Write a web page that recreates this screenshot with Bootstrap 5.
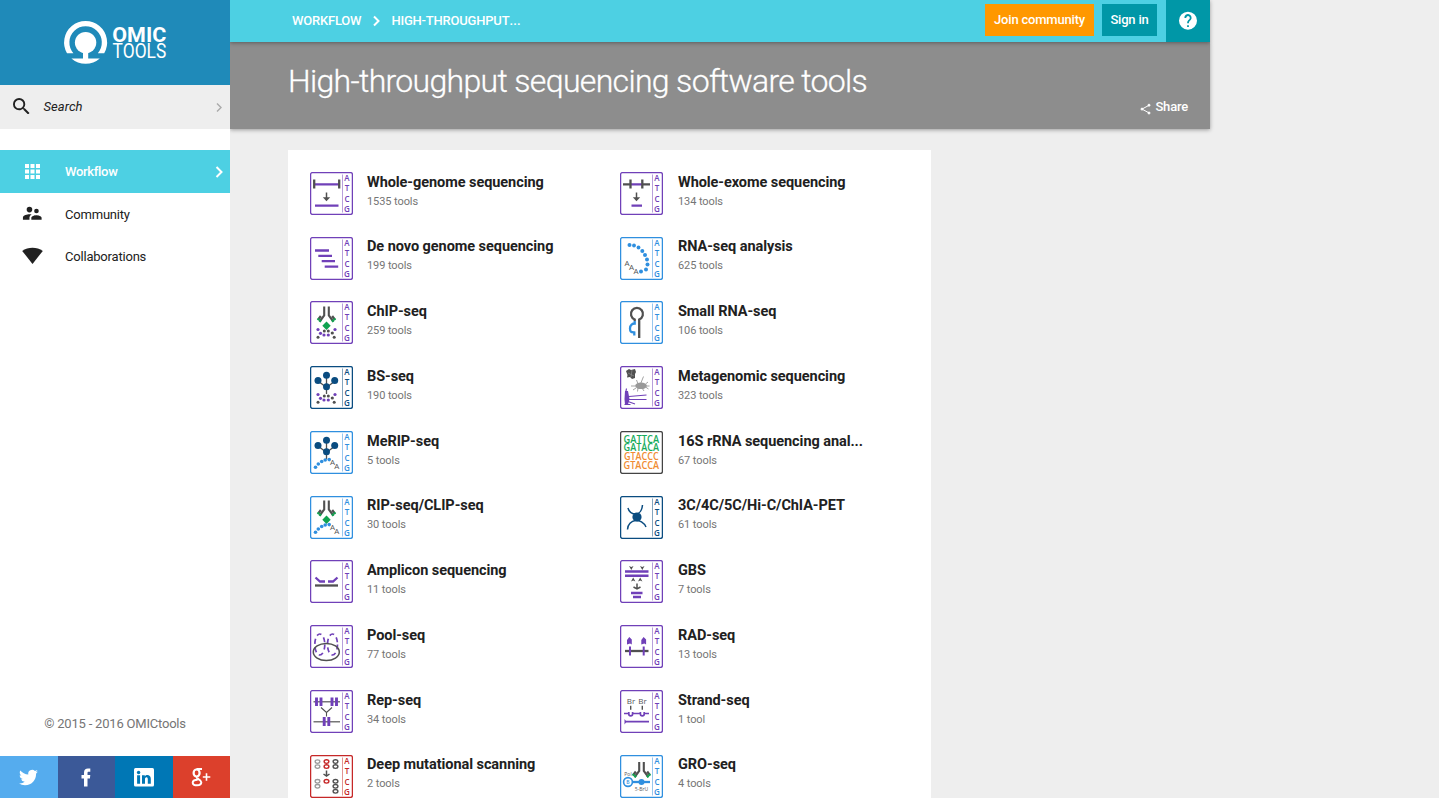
<!DOCTYPE html>
<html lang="en">
<head>
<meta charset="utf-8">
<meta name="viewport" content="width=device-width, initial-scale=1">
<title>High-throughput sequencing software tools</title>
<link href="https://cdn.jsdelivr.net/npm/bootstrap@5.3.0/dist/css/bootstrap.min.css" rel="stylesheet">
<style>
  body { background: #eee; font-family: Roboto, sans-serif; color: #212121; font-size: 13px; line-height: 20px; letter-spacing: -.2px; }
  a { color: inherit; text-decoration: none; }
  svg { display: block; flex: none; }
  .side { width: 230px; background: #fff; z-index: 3; }
  .brand { height: 85px; background: #1f8ab9; padding-left: 64px; padding-top: 1px; letter-spacing: 0; }
  .brand svg { overflow: visible; }
  .searchbar { height: 44px; background: #eee; padding: 0 7px 2px 13px; }
  .searchbar .lbl-search { margin-left: 14px; padding-top: 2px; letter-spacing: .05px; }
  .side-nav { padding-top: 21px; }
  .side-nav .nav-link { height: 42px; padding: 1px 7px 0 22px; color: #212121; }
  .side-nav .nav-link.active { height: 43px; padding-top: 0; background: #4dd0e3; color: #fff; font-weight: 500; letter-spacing: -.3px; }
  .side-nav .lbl { margin-left: 22px; }
  .copy { color: #757575; height: 42px; }
  .social { height: 42px; }
  .social a { flex: 1; display: flex; align-items: center; justify-content: center; }
  .tw { background: #55acee; } .fb-bg { background: #3b5998; } .li-bg { background: #0077b5; } .gp-bg { background: #dc402c; }
  .page-col { width: 980px; }
  .topbar { height: 42px; background: #4dd0e3; box-shadow: 0 1px 4px rgba(0,0,0,.35); padding-left: 62px; z-index: 2; color: #fff; font-weight: 500; }
  .topbar .act { height: 32px; padding: 0; display: flex; align-items: center; justify-content: center; color: #fff; font-size: 13px; font-weight: 500; border: 0; border-radius: 0; }
  .topbar .dots { letter-spacing: .2px; }
  .join { width: 109px; background: #ff9800; margin-right: 8px; }
  .sign { width: 55px; background: #0097a7; margin-right: 9px; }
  .help { width: 44px; height: 42px; background: #0097a7; }
  .hero { height: 87px; background: #8d8d8d; color: #fff; box-shadow: 0 1px 4px rgba(0,0,0,.35); padding: 0 22px 0 58px; }
  .hero h1 { font-size: 32px; font-weight: 300; line-height: 40px; letter-spacing: -.67px; padding-top: 19px; margin: 0 0 -4px; -webkit-text-stroke: .3px #fff; }
  .share { font-weight: 500; }
  .tools { width: 643px; background: #fff; margin: 21px 0 0 58px; padding: 21.9px 0 0 22px; display: grid; grid-template-columns: 310px 311px; grid-auto-rows: 64.75px; letter-spacing: 0; }
  .tool { display: flex; align-items: flex-start; }
  .tool h2 { font-size: 14.5px; font-weight: 700; line-height: 20px; letter-spacing: -.06px; margin: 0; }
  .tool p { font-size: 11px; line-height: 18px; color: #757575; margin: 0; letter-spacing: -.08px; }
  .tool-text { margin-left: 14px; padding-top: .7px; }
  .tool:nth-child(even) .tool-text { margin-left: 15px; }
  .ic { width: 43px; height: 43px; color: #7040b8; fill: none; stroke-width: 2.3; }
  .ic text { fill: currentColor; font-family: "Open Sans", sans-serif; font-weight: 600; font-size: 8px; text-anchor: middle; stroke: none; }
  .ic .gl { fill: #555; font-weight: 400; }
  .ic .tiny { font-size: 5px; }
  .ic .seq { font-size: 9.8px; }
  .ic .sg { fill: #17ab5c; } .ic .so { fill: #f08c32; }
  .c-blue { color: #2f8fdf; } .c-navy { color: #0a4c80; } .c-red { color: #c62828; } .c-gray { color: #444; }
  .p { stroke: #7040b8; } .k { stroke: #505050; } .b { stroke: #2f8fdf; } .g { stroke: #0fa34f; }
  .fp { fill: #7040b8; } .fk { fill: #505050; } .fb { fill: #2f8fdf; } .fg { fill: #0fa34f; } .fn { fill: #0a4c80; }
</style>
</head>
<body class="vh-100 overflow-hidden">
<svg width="0" height="0" class="position-absolute">
  <defs>
    <symbol id="box" viewBox="0 0 43 43"><rect x=".6" y=".6" width="41.8" height="41.8" rx="1.8" fill="#fff" stroke="currentColor" stroke-width="1.3"/></symbol>
    <symbol id="frame" viewBox="0 0 43 43"><use href="#box"/><path d="M32.5 2.500v38" stroke="currentColor" stroke-width="1" opacity=".5"/></symbol>
    <symbol id="arms" viewBox="0 0 43 43" fill="none"><path class="k" stroke-width="2.100" d="M14.200 5.500V14.500l-4.500 6M18.800 5.500V14.500l4.500 6M10.800 15l-2.600 3.500M22.200 15l2.600 3.500"/><path class="g" stroke-width="2.100" d="M11 18.800l-1.500 2M22 18.800l1.500 2M9 17.300l-1.300 1.800M24 17.300l1.300 1.800"/></symbol>
    <symbol id="antibody" viewBox="0 0 43 43"><use href="#arms"/><path class="fg" d="M16.500 20.500l4.200 4.200-4.200 4.200-4.200-4.200z"/></symbol>
    <symbol id="histone" viewBox="0 0 43 43"><g class="fp"><circle cx="8" cy="28.500" r="1.600"/><circle cx="25" cy="28.500" r="1.600"/><circle cx="10.500" cy="32.300" r="1.600"/><circle cx="14" cy="34" r="1.600"/><circle cx="18.300" cy="34" r="1.600"/></g><g class="fk"><circle cx="14.300" cy="30" r="1.500"/><circle cx="18.300" cy="30" r="1.500"/><circle cx="22.300" cy="32" r="1.600"/><circle cx="8" cy="36.300" r="1.500"/><circle cx="24.200" cy="36.300" r="1.500"/></g></symbol>
    <symbol id="methyl" viewBox="0 0 43 43"><path class="k" stroke-width="1.300" fill="none" d="M8 15l8.500 6.500L25 15M16.500 9v19"/><g class="fn"><circle cx="16.500" cy="9.300" r="3.500"/><circle cx="8" cy="14.500" r="3.500"/><circle cx="24.700" cy="14.500" r="3.500"/><circle cx="16.500" cy="20.800" r="3.500"/></g></symbol>
    <symbol id="strand" viewBox="0 0 43 43"><g class="fb"><circle cx="5.500" cy="36.300" r="1.800"/><circle cx="8.300" cy="33" r="1.800"/><circle cx="11.700" cy="30.500" r="1.800"/><circle cx="15.200" cy="29" r="1.800"/><circle cx="19.200" cy="28.600" r="1.800"/></g></symbol>
  </defs>
</svg>
<div class="d-flex h-100">
  <aside class="side d-flex flex-column h-100 position-relative">
    <a href="#" class="brand d-flex align-items-center" aria-label="OMICtools">
      <svg width="104" height="44" viewBox="0 0 104 44" fill="#fff">
        <path d="M9.400 32.200H3A21.500 21.500 0 1 1 40.200 32.200H33.800A16.200 16.200 0 1 0 9.400 32.200Z"/>
        <circle cx="21.600" cy="21.600" r="10.700"/><path d="M19 30h5.200v7.400h11.600a21.500 21.500 0 0 1-28.400 0H19z"/>
        <text x="48.300" y="20.700" font-size="21" font-weight="700" textLength="54" lengthAdjust="spacingAndGlyphs">OMIC</text>
        <text x="48.600" y="37.300" font-size="20" font-weight="400" textLength="53.600" lengthAdjust="spacingAndGlyphs">TOOLS</text>
      </svg>
    </a>
    <div class="searchbar d-flex align-items-center">
      <svg width="16.500" height="16.500" viewBox="3 3 17.500 17.500" fill="#212121"><path d="M15.500 14h-.79l-.28-.27A6.470 6.470 0 0 0 16 9.500 6.500 6.500 0 1 0 9.500 16c1.610 0 3.090-.59 4.230-1.570l.27.28v.79l5 4.990L20.490 19l-4.990-5zm-6 0a4.500 4.500 0 1 1 0-9 4.500 4.500 0 0 1 0 9z"/></svg>
      <span class="fst-italic lbl-search">Search</span>
      <svg class="ms-auto mt-1" width="8" height="10" viewBox="0 0 8 10" fill="none" stroke="#aaa" stroke-width="1.400"><path d="M2 .5l4 4-4 4"/></svg>
    </div>
    <nav class="side-nav nav flex-column">
      <a href="#" class="nav-link active d-flex align-items-center">
        <svg width="21" height="21" viewBox="0 0 21 21" fill="#fff"><path d="M3 3h4v4H3zM8.500 3h4v4h-4zM14 3h4v4h-4zM3 8.500h4v4H3zM8.500 8.500h4v4h-4zM14 8.500h4v4h-4zM3 14h4v4H3zM8.500 14h4v4h-4zM14 14h4v4h-4z"/></svg>
        <span class="lbl">Workflow</span>
        <svg class="ms-auto" width="8" height="12" viewBox="0 0 8 12" fill="none" stroke="#fff" stroke-width="2"><path d="M1.500 1l5 5-5 5"/></svg>
      </a>
      <a href="#" class="nav-link d-flex align-items-center">
        <svg width="21" height="21" viewBox="1 2 22.500 22.500" fill="#212121"><path d="M16.500 12a2.500 2.500 0 1 0 0-5 2.500 2.500 0 0 0 0 5zM9 11a3 3 0 1 0 0-6 3 3 0 0 0 0 6zm7.500 3c-1.830 0-5.500.920-5.500 2.750V19h11v-2.250c0-1.830-3.670-2.750-5.500-2.750zM9 13c-2.330 0-7 1.170-7 3.500V19h7v-2.250c0-.850.330-2.340 2.370-3.470C10.500 13.100 9.660 13 9 13z"/></svg>
        <span class="lbl">Community</span>
      </a>
      <a href="#" class="nav-link d-flex align-items-center">
        <svg width="21" height="21" viewBox="0 0 21 21" fill="#212121"><path d="M.2 4.900C6 .6 15 .6 20.800 4.900L10.500 17.900z"/></svg>
        <span class="lbl">Collaborations</span>
      </a>
    </nav>
    <div class="mt-auto copy text-center">© 2015 - 2016 OMICtools</div>
    <div class="social d-flex">
      <a href="#" aria-label="Twitter" class="tw"><svg width="19" height="19" viewBox="0 0 24 24" fill="#fff"><path d="M23.950 4.570a10 10 0 0 1-2.820.77 4.960 4.960 0 0 0 2.160-2.720c-.95.550-2 .950-3.130 1.180a4.920 4.920 0 0 0-8.380 4.480C7.690 8.090 4.070 6.130 1.640 3.160a4.820 4.820 0 0 0-.67 2.480c0 1.710.870 3.210 2.190 4.100a4.900 4.900 0 0 1-2.230-.62v.060a4.920 4.920 0 0 0 3.950 4.830 5 5 0 0 1-2.210.080 4.940 4.940 0 0 0 4.600 3.420A9.870 9.870 0 0 1 0 19.540a13.990 13.990 0 0 0 7.550 2.210c9.050 0 14-7.500 14-13.980 0-.21 0-.42-.020-.63a9.940 9.940 0 0 0 2.420-2.570z"/></svg></a>
      <a href="#" aria-label="Facebook" class="fb-bg"><svg width="10" height="19" viewBox="0 0 10 19" fill="#fff"><path d="M3 18.500V10.500H.5V7H3V4.800C3 2 4.500.6 7 .6h2.300v3.200H7.700C6.800 3.800 6.500 4.200 6.500 5v2h2.800l-.4 3.500H6.500v8z"/></svg></a>
      <a href="#" aria-label="LinkedIn" class="li-bg"><svg width="20" height="19" viewBox="0 0 20 19"><rect width="20" height="18.500" rx="1.500" fill="#fff"/><g fill="#0077b5"><circle cx="4.600" cy="4.500" r="1.700"/><path d="M3.100 7.300h3v8.500h-3zM8 7.300h2.800v1.200c1.300-2.200 6-2.100 6 2.300v5h-3v-4.500c0-2.700-2.800-2.500-2.800 0v4.500H8z"/></g></svg></a>
      <a href="#" aria-label="Google Plus" class="gp-bg"><svg width="20" height="19" viewBox="0 0 20 19" fill="none" stroke="#fff"><ellipse cx="5.600" cy="5" rx="3" ry="3.500" stroke-width="2.200"/><path d="M5.500 1h5.500M6 9c-1.500 1.500 4.300 2.500 4.300 5.300 0 4-8.600 4-8.600.5 0-2.200 2.500-3 5-3" stroke-width="2"/><path d="M15.500 5.300v7.500M11.800 9h7.500" stroke-width="1.600"/></svg></a>
    </div>
  </aside>
  <main class="page-col">
    <header class="topbar d-flex position-relative">
      <div class="d-flex align-items-center">
        <a href="#">WORKFLOW</a>
        <svg class="mx-2" width="14" height="12" viewBox="0 0 14 12" fill="none" stroke="#fff" stroke-width="2"><path d="M5 1.500L9.500 6 5 10.500"/></svg>
        <a href="#">HIGH-THROUGHPUT<span class="dots">...</span></a>
      </div>
      <div class="ms-auto d-flex pt-1">
        <a href="#" class="act btn join">Join community</a>
        <a href="#" class="act btn sign">Sign in</a>
      </div>
      <a href="#" class="help d-flex align-items-center justify-content-center" aria-label="Help"><svg width="18" height="18" viewBox="2 2.400 20 20" fill="#fff" overflow="visible"><path d="M12 2a10 10 0 1 0 0 20 10 10 0 0 0 0-20zm1 17h-2v-2h2v2zm2.070-7.750l-.9.920C13.450 12.900 13 13.500 13 15h-2v-.5c0-1.100.450-2.100 1.170-2.830l1.240-1.260A2 2 0 1 0 10 9H8a4 4 0 1 1 7.070 2.250z"/></svg></a>
    </header>
    <section class="hero">
      <h1>High-throughput sequencing software tools</h1>
      <a href="#" class="share d-flex justify-content-end align-items-center"><svg width="11" height="12" viewBox="0 0 11 12" fill="#fff" stroke="#fff" class="me-1 mt-1"><path d="M9 2.300L2 6.100l7 3.800" fill="none"/><circle cx="9" cy="2.200" r="1"/><circle cx="2" cy="6.100" r="1"/><circle cx="9" cy="10" r="1"/></svg>Share</a>
    </section>
    <section class="tools">
      <a href="#" class="tool"><svg class="ic" viewBox="0 0 43 43"><use href="#frame"/><text x="37 37 37 37" y="8.500 19 29.500 40">ATCG</text><path class="p" d="M4 12.300h25M5 33.700h23.500"/><path class="k" d="M4.200 7.500v9M29.200 7.500v9"/><path class="k" stroke-width="1.500" d="M16.500 20.500v7"/><path class="fk" d="M12.800 25.200h7.400l-3.700 4z"/></svg><div class="tool-text"><h2>Whole-genome sequencing</h2><p>1535 tools</p></div></a>
      <a href="#" class="tool"><svg class="ic" viewBox="0 0 43 43"><use href="#frame"/><text x="37 37 37 37" y="8.500 19 29.500 40">ATCG</text><path class="p" d="M11 12.300h12M11.500 33.700h10.500"/><path class="k" d="M3 12.300h8M22 12.300h8M10.500 7.500v9M22.300 7.500v9"/><path class="k" stroke-width="1.500" d="M16.500 20.500v7"/><path class="fk" d="M12.800 25.200h7.400l-3.700 4z"/></svg><div class="tool-text"><h2>Whole-exome sequencing</h2><p>134 tools</p></div></a>

      <a href="#" class="tool"><svg class="ic" viewBox="0 0 43 43"><use href="#frame"/><text x="37 37 37 37" y="8.500 19 29.500 40">ATCG</text><path class="p" d="M5 13.500h14M8.300 18.800H22M11.700 24.200H25M14.700 29.700h13.500"/></svg><div class="tool-text"><h2>De novo genome sequencing</h2><p>199 tools</p></div></a>
      <a href="#" class="tool"><svg class="ic c-blue" viewBox="0 0 43 43"><use href="#frame"/><text x="37 37 37 37" y="8.500 19 29.500 40">ATCG</text><g class="fb"><circle cx="9.500" cy="8" r="2"/><circle cx="14" cy="8.500" r="1.900"/><circle cx="18.500" cy="10.500" r="1.900"/><circle cx="22.300" cy="14" r="2"/><circle cx="25" cy="18" r="2"/><circle cx="27" cy="22.500" r="2"/><circle cx="27.500" cy="27.500" r="2"/><circle cx="26" cy="32.500" r="2"/><circle cx="21" cy="34.500" r="2"/></g><text class="gl" x="7 11.500 16" y="29 33 37">AAA</text></svg><div class="tool-text"><h2>RNA-seq analysis</h2><p>625 tools</p></div></a>

      <a href="#" class="tool"><svg class="ic" viewBox="0 0 43 43"><use href="#frame"/><text x="37 37 37 37" y="8.500 19 29.500 40">ATCG</text><use href="#antibody"/><use href="#histone"/></svg><div class="tool-text"><h2>ChIP-seq</h2><p>259 tools</p></div></a>
      <a href="#" class="tool"><svg class="ic c-blue" viewBox="0 0 43 43"><use href="#frame"/><text x="37 37 37 37" y="8.500 19 29.500 40">ATCG</text><path class="k" d="M14.700 20v-1.500a6 6 0 1 1 4.500 0V37"/><path class="b" d="M14.700 20v2.500c-2 0-4.700 1.500-4.700 5s1 3.500 4.300 4v3"/></svg><div class="tool-text"><h2>Small RNA-seq</h2><p>106 tools</p></div></a>

      <a href="#" class="tool"><svg class="ic c-navy" viewBox="0 0 43 43"><use href="#frame"/><text x="37 37 37 37" y="8.500 19 29.500 40">ATCG</text><use href="#methyl"/><use href="#histone"/></svg><div class="tool-text"><h2>BS-seq</h2><p>190 tools</p></div></a>
      <a href="#" class="tool"><svg class="ic" viewBox="0 0 43 43"><use href="#frame"/><text x="37 37 37 37" y="8.500 19 29.500 40">ATCG</text><path class="fk" d="M6 5l3-2 2 1 4-1 1 3-1 2v4l-3 1-2-2-3 .5L7.500 9z"/><path d="M8 7l6 3M12 4l-1 7" stroke="#999" stroke-width=".6"/><ellipse cx="21" cy="19.800" rx="5.800" ry="3.300" fill="#999"/><path d="M20.500 18l3-7.500M18 18l-1.500-4M15.500 20H11M16 22l-3 2M18 22l-.5 3.500M22 22l2 3M26 20h3.500M25.500 18l2.500-2M25.500 21l3 2" stroke="#999" stroke-width=".9"/><path class="fp" d="M5 25h3l1.500 8L8 38.500H5L4.500 33z"/><path class="p" stroke-width="1.200" d="M9 30.500l17.500-1.500M9 33.500h17.500M8 35.500l7 2.500M6 25l.5-2.500M4.500 38.500h6"/></svg><div class="tool-text"><h2>Metagenomic sequencing</h2><p>323 tools</p></div></a>

      <a href="#" class="tool"><svg class="ic c-blue" viewBox="0 0 43 43"><use href="#frame"/><text x="37 37 37 37" y="8.500 19 29.500 40">ATCG</text><use href="#methyl"/><use href="#strand"/><text class="gl" x="22.500 26.800" y="34 37.500">AA</text></svg><div class="tool-text"><h2>MeRIP-seq</h2><p>5 tools</p></div></a>
      <a href="#" class="tool"><svg class="ic c-gray" viewBox="0 0 43 43"><use href="#box"/><text class="seq sg" x="21.300" y="11.600" textLength="35.500" lengthAdjust="spacingAndGlyphs">GATTCA</text><text class="seq sg" x="21.300" y="20.400" textLength="35.500" lengthAdjust="spacingAndGlyphs">GATACA</text><text class="seq so" x="21.300" y="29.100" textLength="34.800" lengthAdjust="spacingAndGlyphs">GTACCC</text><text class="seq so" x="21.300" y="38" textLength="35.500" lengthAdjust="spacingAndGlyphs">GTACCA</text></svg><div class="tool-text"><h2>16S rRNA sequencing anal...</h2><p>67 tools</p></div></a>

      <a href="#" class="tool"><svg class="ic c-blue" viewBox="0 0 43 43"><use href="#frame"/><text x="37 37 37 37" y="8.500 19 29.500 40">ATCG</text><use href="#antibody" y="-1"/><use href="#strand"/><text class="gl" x="22.500 26.800" y="34 37.500">AA</text></svg><div class="tool-text"><h2>RIP-seq/CLIP-seq</h2><p>30 tools</p></div></a>
      <a href="#" class="tool"><svg class="ic c-navy" viewBox="0 0 43 43"><use href="#frame"/><text x="37 37 37 37" y="8.500 19 29.500 40">ATCG</text><path stroke="currentColor" stroke-width="1.500" d="M8 12c1 4 4.500 6 8 6s6-4 6.500-9M7.500 33.500c0-5 4-8.500 8-9s8.500 2 10.500 6.500"/><circle class="fn" cx="17" cy="21" r="4.600"/></svg><div class="tool-text"><h2>3C/4C/5C/Hi-C/ChIA-PET</h2><p>61 tools</p></div></a>

      <a href="#" class="tool"><svg class="ic" viewBox="0 0 43 43"><use href="#frame"/><text x="37 37 37 37" y="8.500 19 29.500 40">ATCG</text><path class="p" d="M5.500 17.500l4.500 4h5M27.500 17.500l-4.500 4h-5"/><path class="k" d="M5 25.500h23"/></svg><div class="tool-text"><h2>Amplicon sequencing</h2><p>11 tools</p></div></a>
      <a href="#" class="tool"><svg class="ic" viewBox="0 0 43 43"><use href="#frame"/><text x="37 37 37 37" y="8.500 19 29.500 40">ATCG</text><path class="p" stroke-width="2.400" d="M5 11.500h23.500M5 15.800h23.500M11 33h11.500M13 37h8"/><path class="fk" d="M9 6l2.300 1L13.500 6l-2.200 4zM20 6l2.300 1L24.500 6l-2.200 4zM11 21.500l2.200-4 2.200 4-2.200-1zM18 21.500l2.200-4 2.200 4-2.200-1z"/><path class="k" stroke-width="1.500" d="M17 23.500v5.500M13.500 27l3.500 2 3.500-2"/></svg><div class="tool-text"><h2>GBS</h2><p>7 tools</p></div></a>

      <a href="#" class="tool"><svg class="ic" viewBox="0 0 43 43"><use href="#frame"/><text x="37 37 37 37" y="8.500 19 29.500 40">ATCG</text><g class="p" stroke-width="1.700" stroke-dasharray="5 3.500"><ellipse cx="9.800" cy="19.500" rx="5" ry="10.500"/><ellipse cx="22.500" cy="19.500" rx="5" ry="10.500"/></g><ellipse class="k" stroke-width="1.500" cx="16.300" cy="27" rx="13" ry="8.500"/></svg><div class="tool-text"><h2>Pool-seq</h2><p>77 tools</p></div></a>
      <a href="#" class="tool"><svg class="ic" viewBox="0 0 43 43"><use href="#frame"/><text x="37 37 37 37" y="8.500 19 29.500 40">ATCG</text><path class="k" d="M5 26h23.500"/><path class="p" stroke-width="2" d="M10 21.500V30.500M23.700 21.500V30.500"/><path class="fp" d="M7 19.500v-4.500l2.300-2.900 2.500 2.400v5l-1.700-1zM21.300 19.500v-4.500l2.300-2.900 2.500 2.400v5l-1.700-1z"/></svg><div class="tool-text"><h2>RAD-seq</h2><p>13 tools</p></div></a>

      <a href="#" class="tool"><svg class="ic" viewBox="0 0 43 43"><use href="#frame"/><text x="37 37 37 37" y="8.500 19 29.500 40">ATCG</text><path d="M3.500 11.700h26.500M3.500 31.700h26.500" stroke="#777" stroke-width="1.600"/><path class="p" stroke-width="2.900" d="M6.500 7.500v8.500M11 7.500v8.500M22 7.500v8.500M26.500 7.500v8.500M14.200 27v9M18.800 27v9"/><path class="k" stroke-width="1.100" d="M11 17.500l5.500 5 5.500-5M16.500 22v4.500"/></svg><div class="tool-text"><h2>Rep-seq</h2><p>34 tools</p></div></a>
      <a href="#" class="tool"><svg class="ic" viewBox="0 0 43 43"><use href="#frame"/><text x="37 37 37 37" y="8.500 19 29.500 40">ATCG</text><text class="gl" x="11" y="13.800">Br</text><text class="gl" x="22.500" y="13.800">Br</text><path class="k" stroke-width="1.400" d="M10.700 15.800v4M22.300 15.800v4"/><path class="p" stroke-width="1.700" d="M4 23.500h5M12.500 23.500h8M24.200 23.500h4.800M8.800 22v2a1.900 1.900 0 0 0 3.800 0v-2M20.400 22v2a1.900 1.900 0 0 0 3.800 0v-2M5 31.700h24"/><path class="fp" d="M4.500 29l2 2.700-2 2.700z"/></svg><div class="tool-text"><h2>Strand-seq</h2><p>1 tool</p></div></a>

      <a href="#" class="tool"><svg class="ic c-red" viewBox="0 0 43 43"><use href="#frame"/><text x="37 37 37 37" y="8.500 19 29.500 40">ATCG</text><g stroke="#999" stroke-width="1.300"><ellipse cx="7.500" cy="6.600" rx="2.400" ry="1.800"/><ellipse cx="7.500" cy="11.600" rx="2.400" ry="1.800"/><ellipse cx="7.500" cy="26.300" rx="2.400" ry="1.800"/><ellipse cx="7.500" cy="31.300" rx="2.400" ry="1.800"/></g><g stroke="#c62828" stroke-width="1.400"><ellipse cx="16.500" cy="6.600" rx="2.400" ry="1.800"/><ellipse cx="16.500" cy="11.600" rx="2.400" ry="1.800"/><ellipse cx="16.500" cy="26.300" rx="2.400" ry="1.800"/></g><g class="k" stroke-width="1.400"><ellipse cx="25.500" cy="6.600" rx="2.400" ry="1.800"/><ellipse cx="25.500" cy="11.600" rx="2.400" ry="1.800"/><ellipse cx="25.500" cy="26.300" rx="2.400" ry="1.800"/><ellipse cx="25.500" cy="31.300" rx="2.400" ry="1.800"/><ellipse cx="25.500" cy="36.300" rx="2.400" ry="1.800"/></g><path class="k" stroke-width="1.500" d="M16.500 15.500v5M13.500 19l3 2 3-2"/></svg><div class="tool-text"><h2>Deep mutational scanning</h2><p>2 tools</p></div></a>
      <a href="#" class="tool"><svg class="ic c-blue" viewBox="0 0 43 43"><use href="#frame"/><text x="37 37 37 37" y="8.500 19 29.500 40">ATCG</text><use href="#arms" x="5" y="1.500"/><path class="b" d="M12 27h18"/><circle class="fb" cx="21.500" cy="27" r="3"/><circle class="b" stroke-width="1.600" cx="8" cy="27" r="4.400"/><text class="tiny" x="8" y="29">B</text><text class="gl tiny" x="8" y="20.500">Pol</text><text class="gl tiny" x="21.500" y="35.500">5-BrU</text></svg><div class="tool-text"><h2>GRO-seq</h2><p>4 tools</p></div></a>
    </section>
  </main>
</div>
<script src="https://cdn.jsdelivr.net/npm/bootstrap@5.3.0/dist/js/bootstrap.bundle.min.js"></script>
</body>
</html>
